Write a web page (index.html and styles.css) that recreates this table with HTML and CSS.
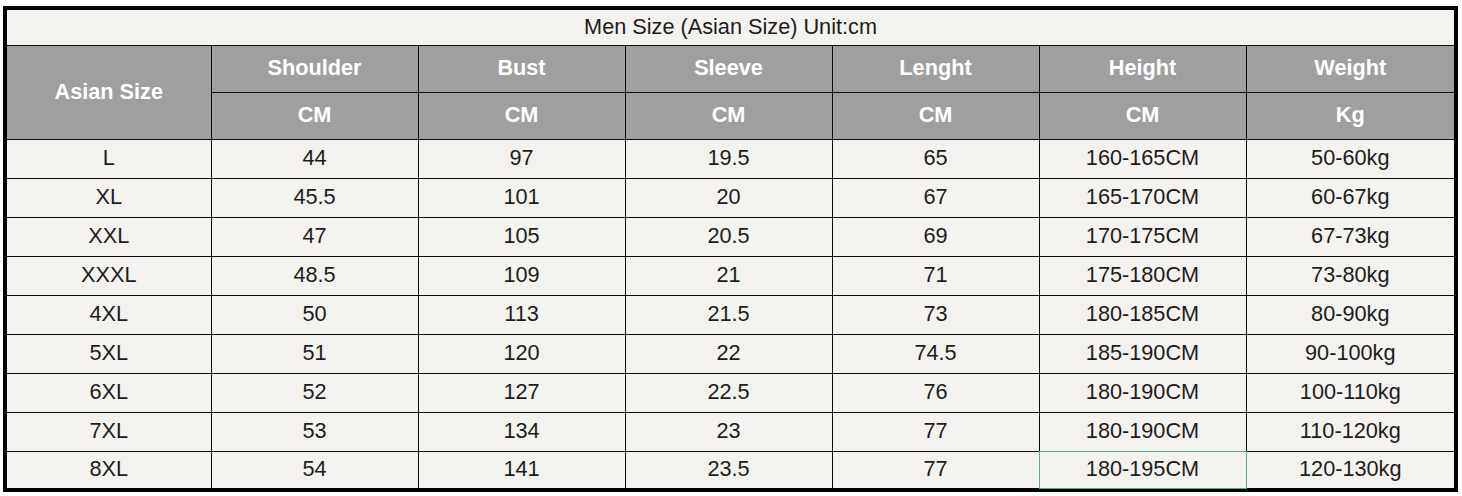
FILE: index.html
```html
<!DOCTYPE html>
<html>
<head>
<meta charset="utf-8">
<link rel="stylesheet" href="styles.css">
</head>
<body>
<div class="frame">
<table class="size-table">
<colgroup>
<col class="c-first"><col class="c-mid"><col class="c-mid"><col class="c-mid"><col class="c-mid"><col class="c-mid"><col class="c-last">
</colgroup>
<tr class="r-title"><td colspan="7" class="title">Men Size (Asian Size) Unit:cm</td></tr>
<tr class="r-head">
<th rowspan="2">Asian Size</th><th>Shoulder</th><th>Bust</th><th>Sleeve</th><th>Lenght</th><th>Height</th><th>Weight</th>
</tr>
<tr class="r-head">
<th>CM</th><th>CM</th><th>CM</th><th>CM</th><th>CM</th><th>Kg</th>
</tr>
<tr class="r-body"><td>L</td><td>44</td><td>97</td><td>19.5</td><td>65</td><td>160-165CM</td><td>50-60kg</td></tr>
<tr class="r-body"><td>XL</td><td>45.5</td><td>101</td><td>20</td><td>67</td><td>165-170CM</td><td>60-67kg</td></tr>
<tr class="r-body"><td>XXL</td><td>47</td><td>105</td><td>20.5</td><td>69</td><td>170-175CM</td><td>67-73kg</td></tr>
<tr class="r-body"><td>XXXL</td><td>48.5</td><td>109</td><td>21</td><td>71</td><td>175-180CM</td><td>73-80kg</td></tr>
<tr class="r-body"><td>4XL</td><td>50</td><td>113</td><td>21.5</td><td>73</td><td>180-185CM</td><td>80-90kg</td></tr>
<tr class="r-body"><td>5XL</td><td>51</td><td>120</td><td>22</td><td>74.5</td><td>185-190CM</td><td>90-100kg</td></tr>
<tr class="r-body"><td>6XL</td><td>52</td><td>127</td><td>22.5</td><td>76</td><td>180-190CM</td><td>100-110kg</td></tr>
<tr class="r-body"><td>7XL</td><td>53</td><td>134</td><td>23</td><td>77</td><td>180-190CM</td><td>110-120kg</td></tr>
<tr class="r-body r-last"><td>8XL</td><td>54</td><td>141</td><td>23.5</td><td>77</td><td class="sel">180-195CM</td><td>120-130kg</td></tr>
</table>
</div>
</body>
</html>
```

FILE: styles.css
```css
html, body {
  margin: 0;
  padding: 0;
  background: #ffffff;
}

.frame {
  margin: 6px 0 0 3px;
  width: 1447px;
  border: 4px solid #000;
  background: #f4f2ef;
}

.size-table {
  width: 1447px;
  border-collapse: collapse;
  table-layout: fixed;
  border-style: hidden;
  font-family: "Liberation Sans", Arial, sans-serif;
  font-size: 21.7px;
  color: #1c1c1c;
}

.c-first { width: 204px; }
.c-mid { width: 207px; }
.c-last { width: 208px; }

.size-table td,
.size-table th {
  border: 1px solid #0a0a0a;
  padding: 0 0 2px 0;
  text-align: center;
  vertical-align: middle;
  line-height: 1;
}

.size-table th {
  background: #9f9f9f;
  color: #ffffff;
  font-weight: bold;
  padding: 0 0 1px 0;
}

.r-title { height: 35px; }
.r-head { height: 47px; }
.r-body { height: 39px; }
.r-last { height: 37px; }

.size-table .title {
  color: #1c1c1c;
  padding: 0;
}

.sel {
  position: relative;
}

.sel::after {
  content: "";
  position: absolute;
  left: -1px;
  top: -1px;
  right: -1px;
  bottom: -1px;
  border: 1px solid #5ea98a;
  pointer-events: none;
}
```
